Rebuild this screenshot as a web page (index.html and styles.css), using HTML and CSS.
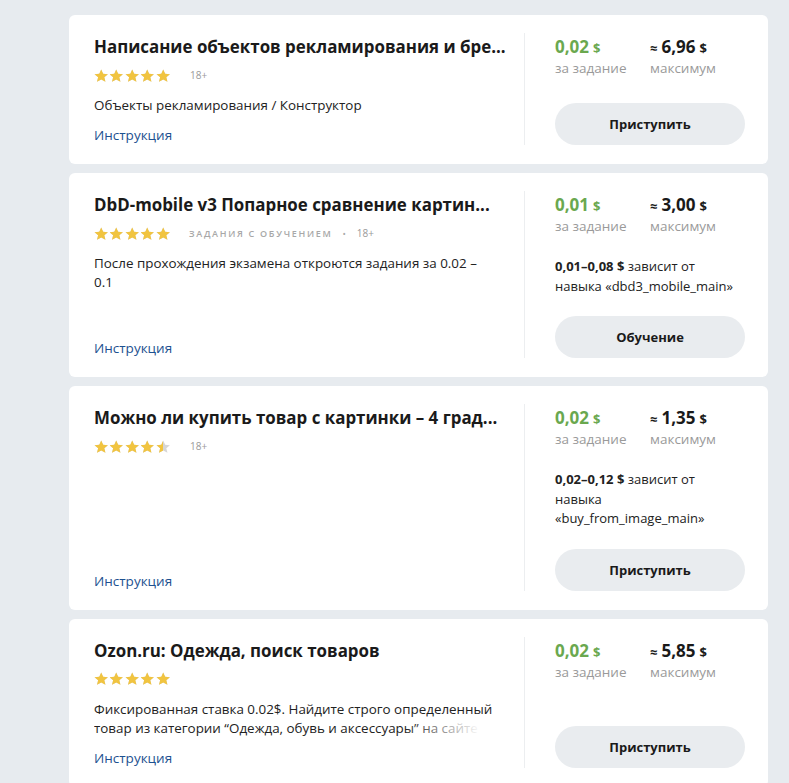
FILE: index.html
```html
<!DOCTYPE html>
<html lang="ru">
<head>
<meta charset="utf-8">
<title>Задания</title>
<link rel="stylesheet" href="styles.css">
</head>
<body>
<div class="list">

  <div class="card">
    <div class="info">
      <div class="title">Написание объектов рекламирования и бре...</div>
      <div class="meta">
        <span class="stars"><span class="fill" style="width:100%"></span></span>
        <span class="age">18+</span>
      </div>
      <div class="desc">Объекты рекламирования / Конструктор</div>
      <a class="link" href="#">Инструкция</a>
    </div>
    <div class="side">
      <div class="prices">
        <div class="pr"><div class="val green">0,02<span class="cur">$</span></div><div class="lbl">за задание</div></div>
        <div class="pr"><div class="val"><span class="approx">≈</span>6,96<span class="cur">$</span></div><div class="lbl">максимум</div></div>
      </div>
      <button class="btn">Приступить</button>
    </div>
  </div>

  <div class="card">
    <div class="info">
      <div class="title">DbD-mobile v3 Попарное сравнение картин...</div>
      <div class="meta">
        <span class="stars"><span class="fill" style="width:100%"></span></span>
        <span class="tag">Задания с обучением</span>
        <span class="dot">•</span>
        <span class="age">18+</span>
      </div>
      <div class="desc">После прохождения экзамена откроются задания за 0.02 – 0.1</div>
      <a class="link" href="#">Инструкция</a>
    </div>
    <div class="side">
      <div class="prices">
        <div class="pr"><div class="val green">0,01<span class="cur">$</span></div><div class="lbl">за задание</div></div>
        <div class="pr"><div class="val"><span class="approx">≈</span>3,00<span class="cur">$</span></div><div class="lbl">максимум</div></div>
      </div>
      <div class="extra"><b>0,01–0,08 $</b> зависит от навыка «dbd3_mobile_main»</div>
      <button class="btn">Обучение</button>
    </div>
  </div>

  <div class="card">
    <div class="info">
      <div class="title">Можно ли купить товар с картинки – 4 град...</div>
      <div class="meta">
        <span class="stars"><span class="fill" style="width:89%"></span></span>
        <span class="age">18+</span>
      </div>
      <a class="link" href="#">Инструкция</a>
    </div>
    <div class="side">
      <div class="prices">
        <div class="pr"><div class="val green">0,02<span class="cur">$</span></div><div class="lbl">за задание</div></div>
        <div class="pr"><div class="val"><span class="approx">≈</span>1,35<span class="cur">$</span></div><div class="lbl">максимум</div></div>
      </div>
      <div class="extra"><b>0,02–0,12 $</b> зависит от навыка «buy_from_image_main»</div>
      <button class="btn">Приступить</button>
    </div>
  </div>

  <div class="card">
    <div class="info">
      <div class="title">Ozon.ru: Одежда, поиск товаров</div>
      <div class="meta">
        <span class="stars"><span class="fill" style="width:100%"></span></span>
      </div>
      <div class="desc clamp">Фиксированная ставка 0.02$. Найдите строго определенный товар из категории “Одежда, обувь и аксессуары” на сайте Ozon.ru</div>
      <a class="link" href="#">Инструкция</a>
    </div>
    <div class="side">
      <div class="prices">
        <div class="pr"><div class="val green">0,02<span class="cur">$</span></div><div class="lbl">за задание</div></div>
        <div class="pr"><div class="val"><span class="approx">≈</span>5,85<span class="cur">$</span></div><div class="lbl">максимум</div></div>
      </div>
      <button class="btn">Приступить</button>
    </div>
  </div>

</div>
</body>
</html>
```
FILE: styles.css
```css
html, body {
  margin: 0;
  padding: 0;
  background: #e7ebef;
  font-family: "Open Sans", "Noto Sans", Arial, sans-serif;
  color: #1f1f1f;
}
.list {
  margin-left: 69px;
  width: 699px;
  padding-top: 15px;
  display: flex;
  flex-direction: column;
  gap: 9px;
}
.card {
  background: #fff;
  border-radius: 6px;
  display: flex;
  padding: 18px 23px 19px 25px;
}
.info {
  width: 430px;
  display: flex;
  flex-direction: column;
  min-width: 0;
}
.title {
  font-size: 16.9px;
  font-weight: 700;
  line-height: 28px;
  height: 28px;
  white-space: nowrap;
  overflow: hidden;
  text-overflow: ellipsis;
  color: #1a1a1a;
}
.meta {
  display: flex;
  align-items: center;
  height: 15px;
  margin-top: 7px;
  line-height: 15px;
}
.stars {
  position: relative;
  display: inline-block;
  width: 77px;
  height: 14px;
  background-image: url("data:image/svg+xml,%3Csvg xmlns='http://www.w3.org/2000/svg' width='15.5' height='14' viewBox='0 0 15.5 14'%3E%3Cpath d='M7 0.5l1.9 4.3 4.6 0.4-3.5 3 1.1 4.6L7 10.4 2.9 12.8 4 8.2 0.5 5.2l4.6-0.4z' fill='%23d6d6d6'/%3E%3C/svg%3E");
  background-repeat: repeat-x;
}
.stars .fill {
  position: absolute;
  left: 0;
  top: 0;
  height: 14px;
  background-image: url("data:image/svg+xml,%3Csvg xmlns='http://www.w3.org/2000/svg' width='15.5' height='14' viewBox='0 0 15.5 14'%3E%3Cpath d='M7 0.5l1.9 4.3 4.6 0.4-3.5 3 1.1 4.6L7 10.4 2.9 12.8 4 8.2 0.5 5.2l4.6-0.4z' fill='%23f1c440'/%3E%3C/svg%3E");
  background-repeat: repeat-x;
}
.age {
  font-size: 10px;
  color: #9a9a9a;
  margin-left: 19px;
}
.tag {
  font-size: 9px;
  text-transform: uppercase;
  letter-spacing: 1.7px;
  color: #a8a8a8;
  margin-left: 18px;
  font-weight: 600;
}
.dot {
  font-size: 9px;
  color: #a8a8a8;
  margin: 0 11px 0 10px;
}
.tag + .dot + .age { margin-left: 0; }
.desc {
  margin-top: 13px;
  font-size: 13.4px;
  line-height: 19px;
  max-width: 400px;
  color: #222;
}
.clamp {
  position: relative;
  height: 38px;
  overflow: hidden;
}
.clamp::after {
  content: "";
  position: absolute;
  right: 0;
  bottom: 0;
  width: 90px;
  height: 19px;
  background: linear-gradient(to right, rgba(255,255,255,0), #fff 85%);
}
.link {
  margin-top: auto;
  padding-top: 10px;
  font-size: 13.5px;
  line-height: 20px;
  height: 20px;
  color: #1d5190;
  text-decoration: none;
}
.side {
  width: 190px;
  border-left: 1px solid #eceef0;
  padding-left: 30px;
  display: flex;
  flex-direction: column;
}
.prices {
  display: grid;
  grid-template-columns: 95px auto;
  margin-bottom: 28px;
}
.val {
  font-size: 17px;
  font-weight: 700;
  line-height: 28px;
  height: 28px;
  color: #1a1a1a;
}
.val.green { color: #6aa84f; }
.cur {
  font-size: 13px;
  margin-left: 4px;
  line-height: 1;
}
.approx {
  font-size: 13px;
  margin-right: 4px;
  line-height: 1;
}
.lbl {
  font-size: 13.5px;
  line-height: 14px;
  height: 14px;
  color: #9a9a9a;
}
.extra {
  margin-top: -4px;
  margin-bottom: 20px;
  font-size: 13px;
  line-height: 19.5px;
  color: #222;
}
.extra b { font-weight: 700; }
.btn {
  margin-top: auto;
  border: 0;
  background: #e9ecef;
  border-radius: 21px;
  height: 42px;
  width: 190px;
  font-family: inherit;
  font-size: 13px;
  font-weight: 700;
  color: #1a1a1a;
  flex-shrink: 0;
}
```
